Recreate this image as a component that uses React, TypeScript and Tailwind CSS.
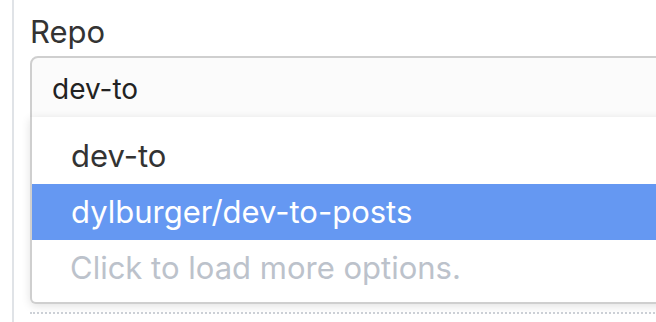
import React from "react";

export default function App() {
  return (
    <div
      className="w-[656px] h-[322px] bg-white overflow-hidden flex pl-[12px]"
      style={{ fontFamily: "Inter, 'Liberation Sans', sans-serif" }}
    >
      <div className="border-l-2 border-[#e0e3e7] h-full flex-1 pl-[16px] relative">
        <div className="pt-[13px] text-[31px] leading-[37px] text-[#333333]">Repo</div>
        <div className="mt-[6px] w-[700px] h-[66px] border-2 border-[#cfcfcf] rounded-tl-[8px] bg-[#fbfbfb] flex items-center pl-[20px] text-[28px] text-[#222222]">
          dev-to
        </div>
        <div className="mt-[190px] w-[700px] border-b-2 border-dotted border-[#cdd1d7]" />
        <div className="absolute left-[16px] top-[117px] w-[700px] h-[187px] bg-white border-2 border-t-0 border-[#cfcfcf] rounded-b-[6px] shadow-[0_2px_10px_rgba(0,0,0,0.12)] pt-[11px]">
          <div className="h-[56px] flex items-center pl-[39px] text-[31px] text-[#333333]">dev-to</div>
          <div className="h-[56px] flex items-center pl-[39px] text-[31px] text-white bg-[#6598f2]">
            dylburger/dev-to-posts
          </div>
          <div className="h-[56px] flex items-center pl-[38px] text-[31px] text-[#bcc2cb]">
            Click to load more options.
          </div>
        </div>
      </div>
    </div>
  );
}
